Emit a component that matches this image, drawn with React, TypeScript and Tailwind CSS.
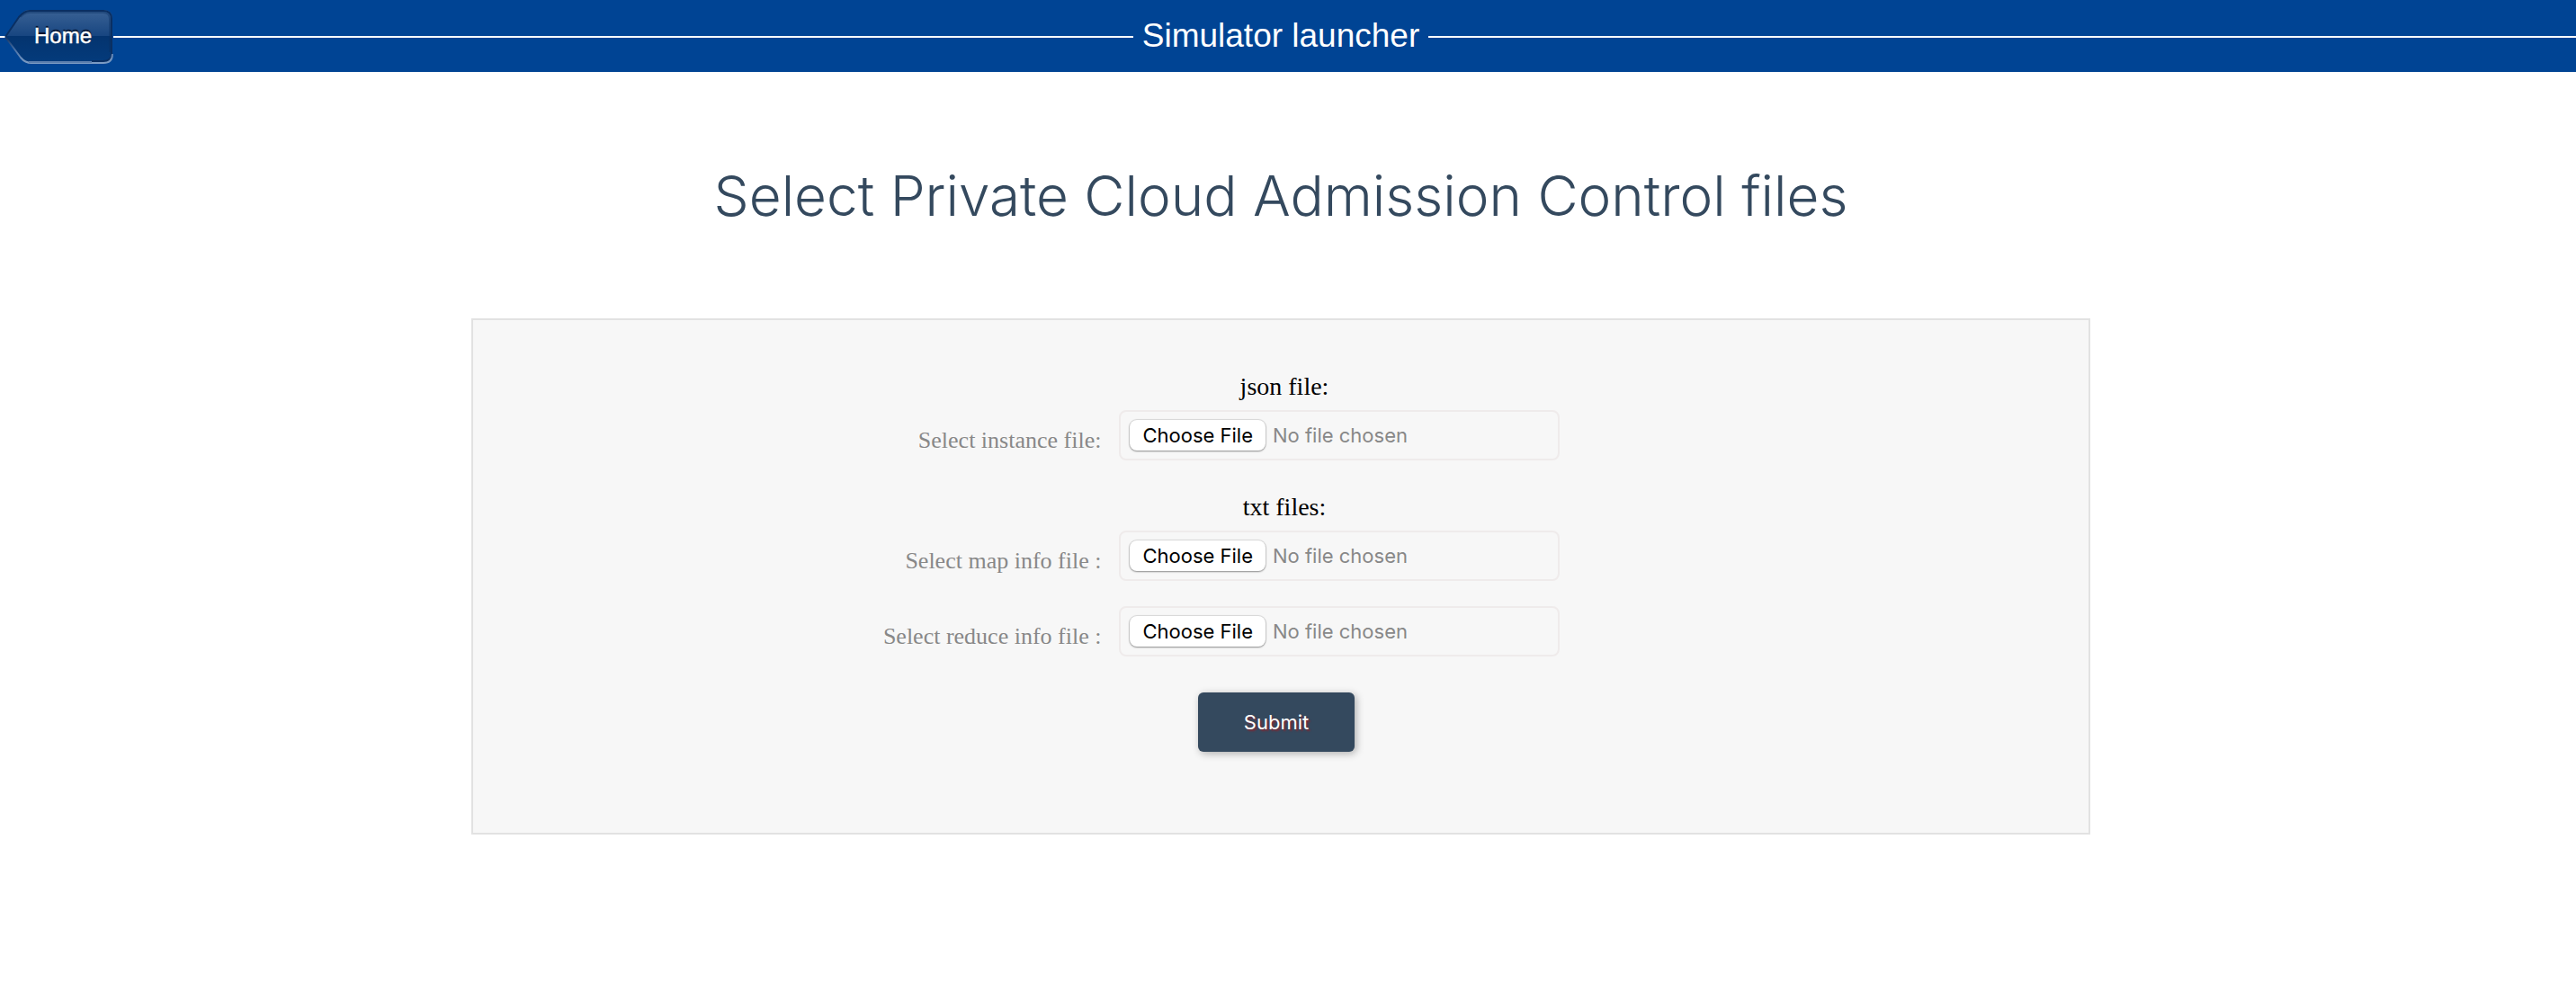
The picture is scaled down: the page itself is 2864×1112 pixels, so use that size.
import React from "react";

function HomeLink() {
  return (
    <a
      href="#"
      className="relative z-10 my-2 ml-1 flex h-16 w-[122px] items-center pl-[34px] font-['Liberation_Sans',Arial,sans-serif] text-2xl text-white [-webkit-text-stroke:0.5px_white] [text-shadow:0_-2px_1px_#000a1e]"
    >
      <svg className="absolute inset-0 -z-10 h-full w-full" viewBox="0 0 122 64" aria-hidden="true">
        <defs>
          <linearGradient id="homeFill" x1="0" y1="0" x2="0" y2="1">
            <stop offset="0" stopColor="#3a6295" />
            <stop offset="0.5" stopColor="#174580" />
            <stop offset="0.5" stopColor="#04346f" />
            <stop offset="1" stopColor="#043b7c" />
          </linearGradient>
          <linearGradient id="homeEdge" x1="0" y1="0" x2="0" y2="1">
            <stop offset="0" stopColor="#12315f" />
            <stop offset="0.5" stopColor="#4b73a8" />
            <stop offset="1" stopColor="#7d9cc4" />
          </linearGradient>
        </defs>
        <path
          d="M28 3H111Q121 3 121 13V52Q121 62 111 62H31Q24 62 19 56L2 33L17 11Q22 3 28 3Z"
          fill="url(#homeFill)"
        />
        <path d="M2 33L17 11Q23 4 29 4H111Q120 4 120 13V52Q120 60 111 60H98" fill="none" stroke="#0a2f62" strokeWidth="2" />
        <path d="M19 11Q23 6 29 6H111Q118 6 118 13V50" fill="none" stroke="#0a2f62" strokeOpacity="0.4" strokeWidth="2" />
        <path d="M2 33L19 56Q24 62 31 62H111Q121 62 121 52" fill="none" stroke="url(#homeEdge)" strokeWidth="2" />
        <path d="M28 61H98" stroke="#5c7fae" strokeWidth="2" />
      </svg>
      Home
    </a>
  );
}

function FileRow({ id, label }: { id: string; label: string }) {
  return (
    <div className="grid grid-cols-[7fr_11fr] items-center">
      <label htmlFor={id} className="pt-3 text-right text-[26px] leading-8 text-[#888888]">
        {label}
      </label>
      <div className="pl-5">
        <input
          id={id}
          type="file"
          className="block h-14 w-[490px] max-w-full rounded-lg border-2 border-[#efebeb] px-2.5 py-[9px] font-[Inter,sans-serif] text-[22px] leading-8 text-[#888888] file:my-0 file:mr-2 file:ml-0 file:h-[34px] file:rounded-lg file:bg-white file:px-3.5 file:text-[22px] file:leading-8 file:text-black file:shadow-[0_0_1px_1px_rgba(0,0,0,0.12),0_1px_2px_rgba(0,0,0,0.35)]"
        />
      </div>
    </div>
  );
}

export default function App() {
  return (
    <div className="bg-white font-['Liberation_Serif',Georgia,serif]">
      <header className="flex h-20 items-center bg-[#004494] pr-4">
        <div className="flex flex-1 items-center">
          <div className="mt-0.5 h-0.5 w-1.5 bg-white" />
          <div className="-ml-1.5">
            <HomeLink />
          </div>
          <div className="mt-0.5 h-0.5 flex-1 bg-white" />
        </div>
        <h1 className="px-2.5 font-['Liberation_Sans',Arial,sans-serif] text-[37px] leading-10 text-white">
          Simulator launcher
        </h1>
        <div className="flex-1">
          <div className="mt-0.5 -mr-4 h-0.5 bg-white" />
        </div>
      </header>
      <main className="pr-4">
        <h2 className="pt-[98px] text-center font-[Inter,sans-serif] text-[62px] leading-20 font-light text-[#34495e]">
          Select Private Cloud Admission Control files
        </h2>
        <form
          className="mx-auto mt-24 w-full max-w-[1800px] border-2 border-[#e2e2e2] bg-[#f7f7f7] pt-[58px] pb-[90px]"
          onSubmit={(e) => e.preventDefault()}
        >
          <h3 className="pb-2.5 pl-2 text-center text-[28px] leading-8 text-black">json file:</h3>
          <FileRow id="instance" label="Select instance file:" />
          <h3 className="pt-9 pb-2.5 pl-2 text-center text-[28px] leading-8 text-black">txt files:</h3>
          <FileRow id="map" label="Select map info file :" />
          <div className="pt-7">
            <FileRow id="reduce" label="Select reduce info file :" />
          </div>
          <div className="flex justify-center pt-10 pr-2.5">
            <button
              type="submit"
              className="h-[66px] w-[174px] rounded-md bg-[#34495e] font-[Inter,sans-serif] text-[22px] text-white shadow-[2px_2px_8px_rgba(0,0,0,0.3)] [text-shadow:2px_2px_2px_#7b2a35]"
            >
              Submit
            </button>
          </div>
        </form>
      </main>
    </div>
  );
}
